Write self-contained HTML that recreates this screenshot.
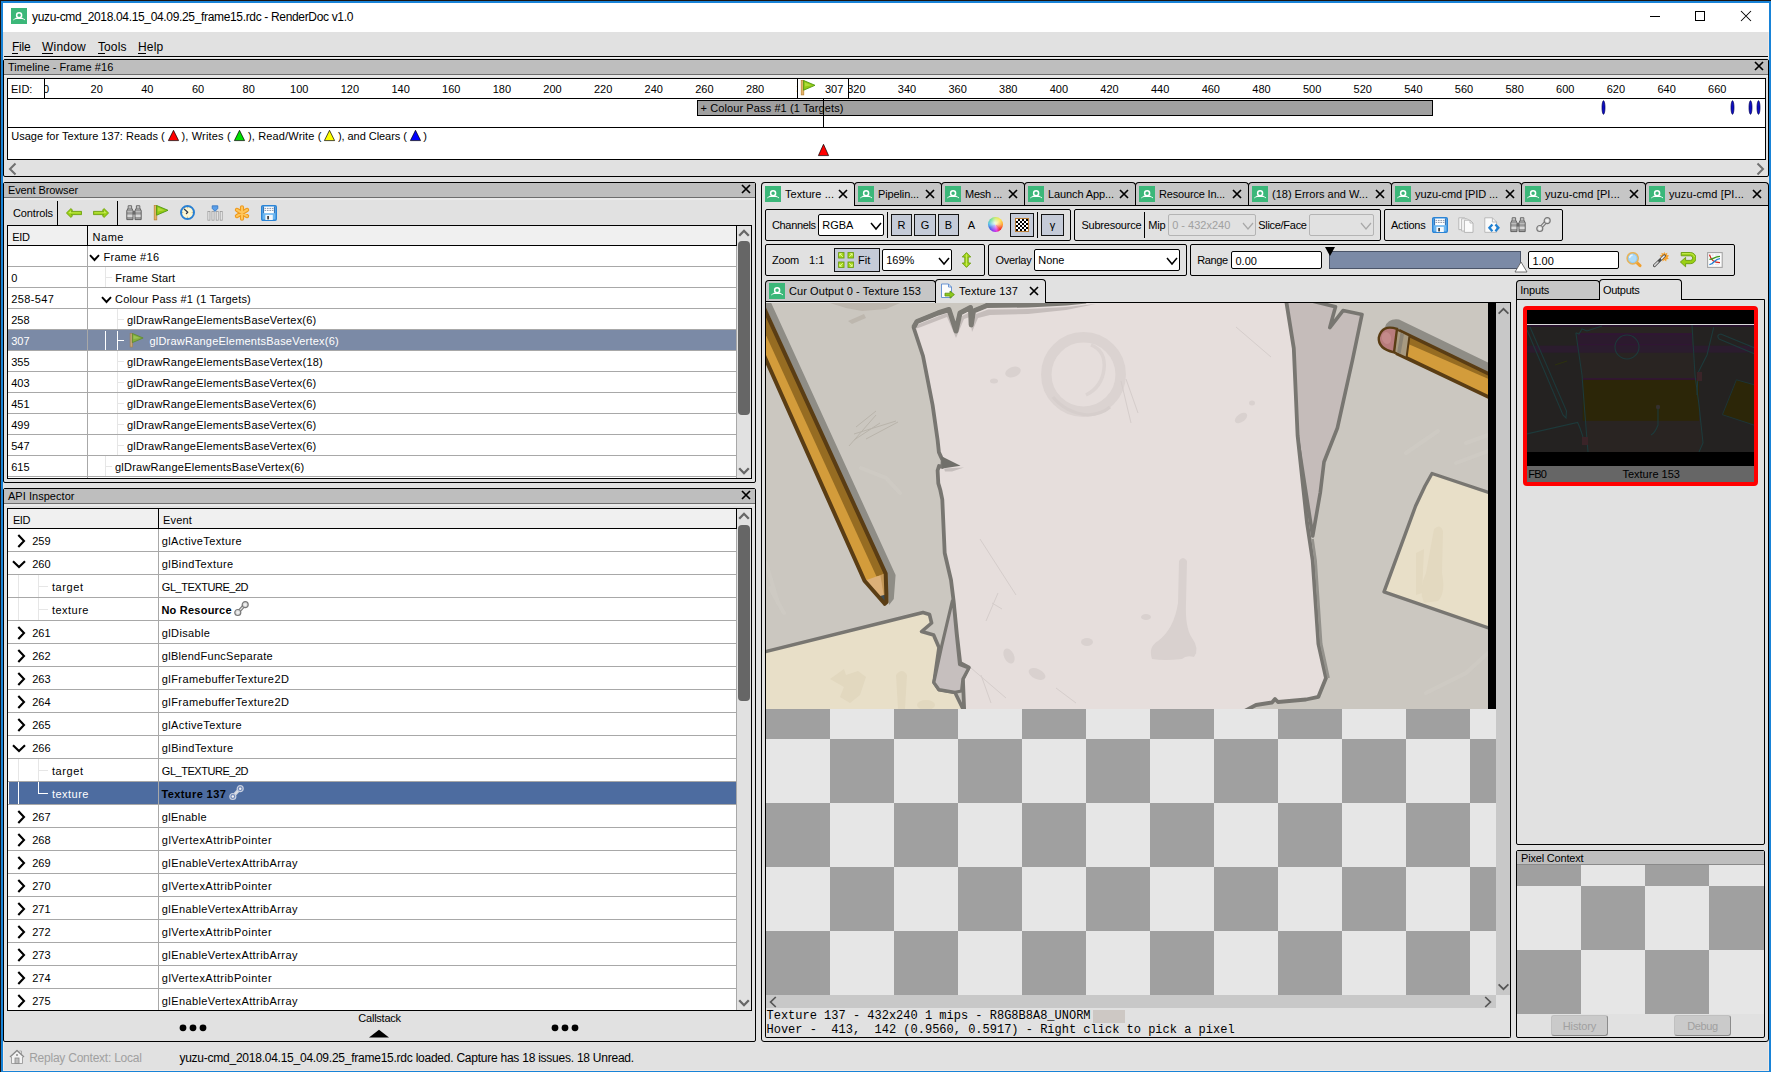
<!DOCTYPE html>
<html lang="en"><head><meta charset="utf-8"><title>yuzu-cmd_2018.04.15_04.09.25_frame15.rdc - RenderDoc v1.0</title>
<style>
html,body{margin:0;padding:0;}
body{width:1771px;height:1072px;overflow:hidden;position:relative;background:#e1e1e1;font-family:"Liberation Sans",sans-serif;font-size:11px;color:#000;}
#app div,#app span,#app svg{position:absolute;box-sizing:border-box;}
#app span{white-space:pre;line-height:1;}
#app{position:absolute;left:0;top:0;width:1771px;height:1072px;overflow:hidden;}
</style></head>
<body><div id="app">
<div style="left:0px;top:0px;width:1771px;height:1072px;background:#e1e1e1;"></div>
<div style="left:0px;top:0px;width:1771px;height:1px;background:#1b1512;"></div>
<div style="left:0px;top:0px;width:1px;height:1072px;background:#1b1512;"></div>
<div style="left:1px;top:1px;width:1770px;height:2px;background:#1883d7;"></div>
<div style="left:1px;top:1px;width:2px;height:1071px;background:#1883d7;"></div>
<div style="left:1769px;top:1px;width:2px;height:1071px;background:#1883d7;"></div>
<div style="left:1px;top:1071px;width:1770px;height:1px;background:#1883d7;"></div>
<div style="left:3px;top:3px;width:1766px;height:29px;background:#fff;"></div>
<svg style="left:11px;top:8px;" width="16" height="16" viewBox="0 0 16 16"><rect width="16" height="16" fill="#3bb779"/><circle cx="8.1" cy="7.2" r="2.5" fill="none" stroke="#fff" stroke-width="1.5"/><path d="M2.6 11.7 C4.4 10.3 5.6 10.3 8.1 10.3 C10.6 10.3 11.8 10.3 13.7 11.7" fill="none" stroke="#fff" stroke-width="0.9" stroke-linecap="round"/><path d="M4.9 10.3 H11.3" stroke="#fff" stroke-width="1.3" stroke-linecap="round"/></svg>
<span style="left:32.00px;top:11.00px;font-size:12px;letter-spacing:-0.337px;">yuzu-cmd_2018.04.15_04.09.25_frame15.rdc - RenderDoc v1.0</span>
<svg style="left:1649px;top:15px;" width="12" height="3" viewBox="0 0 12 3"><path d="M1 1.5 H11" stroke="#000" stroke-width="1"/></svg>
<div style="left:1695px;top:11px;width:10px;height:10px;border:1px solid #000;"></div>
<svg style="left:1740px;top:10px;" width="12" height="12" viewBox="0 0 12 12"><path d="M1 1 L11 11 M11 1 L1 11" stroke="#000" stroke-width="1.05" fill="none"/></svg>
<span style="left:12.00px;top:41.00px;font-size:12px;letter-spacing:-0.211px;">File</span>
<div style="left:12px;top:53px;width:6px;height:1px;background:#000;"></div>
<span style="left:42.00px;top:41.00px;font-size:12px;letter-spacing:0.219px;">Window</span>
<div style="left:42px;top:53px;width:11px;height:1px;background:#000;"></div>
<span style="left:98.00px;top:41.00px;font-size:12px;letter-spacing:0.097px;">Tools</span>
<div style="left:98px;top:53px;width:6.5px;height:1px;background:#000;"></div>
<span style="left:138.00px;top:41.00px;font-size:12px;letter-spacing:0.203px;">Help</span>
<div style="left:138px;top:53px;width:8px;height:1px;background:#000;"></div>
<div style="left:4px;top:56px;width:1764px;height:1px;background:#000;"></div>
<div style="left:4px;top:57px;width:1764px;height:1px;background:#f0f0f0;"></div>
<div style="left:3px;top:59px;width:1766px;height:118px;border:1px solid #000;border-radius:2px;"></div>
<div style="left:4px;top:60px;width:1764px;height:14px;background:#bebebe;"></div>
<div style="left:4px;top:74px;width:1764px;height:1px;background:#6e6e6e;"></div>
<div style="left:4px;top:75px;width:1764px;height:2px;background:#ebebeb;"></div>
<span style="left:8.00px;top:62.00px;font-size:11px;letter-spacing:0.059px;">Timeline - Frame #16</span>
<svg style="left:1754px;top:61px;" width="10" height="10" viewBox="0 0 10 10"><path d="M1 1 L9 9 M9 1 L1 9" stroke="#000" stroke-width="1.7" fill="none"/></svg>
<div style="left:7px;top:78px;width:1759px;height:82px;background:#fff;border:1px solid #000;"></div>
<div style="left:8px;top:98px;width:1757px;height:1px;background:#000;"></div>
<div style="left:8px;top:127px;width:1757px;height:1px;background:#000;"></div>
<div style="left:44px;top:79px;width:1px;height:19px;background:#000;"></div>
<span style="left:11.00px;top:84.00px;font-size:11px;">EID:</span>
<div style="left:45px;top:79px;width:1720px;height:19px;overflow:hidden;">
<span style="left:-1.96px;top:5.00px;font-size:11px;">0</span>
<span style="left:45.62px;top:5.00px;font-size:11px;">20</span>
<span style="left:96.25px;top:5.00px;font-size:11px;">40</span>
<span style="left:146.90px;top:5.00px;font-size:11px;">60</span>
<span style="left:197.53px;top:5.00px;font-size:11px;">80</span>
<span style="left:245.12px;top:5.00px;font-size:11px;">100</span>
<span style="left:295.76px;top:5.00px;font-size:11px;">120</span>
<span style="left:346.40px;top:5.00px;font-size:11px;">140</span>
<span style="left:397.04px;top:5.00px;font-size:11px;">160</span>
<span style="left:447.68px;top:5.00px;font-size:11px;">180</span>
<span style="left:498.32px;top:5.00px;font-size:11px;">200</span>
<span style="left:548.96px;top:5.00px;font-size:11px;">220</span>
<span style="left:599.60px;top:5.00px;font-size:11px;">240</span>
<span style="left:650.24px;top:5.00px;font-size:11px;">260</span>
<span style="left:700.88px;top:5.00px;font-size:11px;">280</span>
<span style="left:751.52px;top:5.00px;font-size:11px;">300</span>
<span style="left:802.16px;top:5.00px;font-size:11px;">320</span>
<span style="left:852.80px;top:5.00px;font-size:11px;">340</span>
<span style="left:903.44px;top:5.00px;font-size:11px;">360</span>
<span style="left:954.08px;top:5.00px;font-size:11px;">380</span>
<span style="left:1004.72px;top:5.00px;font-size:11px;">400</span>
<span style="left:1055.36px;top:5.00px;font-size:11px;">420</span>
<span style="left:1106.00px;top:5.00px;font-size:11px;">440</span>
<span style="left:1156.64px;top:5.00px;font-size:11px;">460</span>
<span style="left:1207.28px;top:5.00px;font-size:11px;">480</span>
<span style="left:1257.92px;top:5.00px;font-size:11px;">500</span>
<span style="left:1308.56px;top:5.00px;font-size:11px;">520</span>
<span style="left:1359.20px;top:5.00px;font-size:11px;">540</span>
<span style="left:1409.84px;top:5.00px;font-size:11px;">560</span>
<span style="left:1460.48px;top:5.00px;font-size:11px;">580</span>
<span style="left:1511.12px;top:5.00px;font-size:11px;">600</span>
<span style="left:1561.76px;top:5.00px;font-size:11px;">620</span>
<span style="left:1612.40px;top:5.00px;font-size:11px;">640</span>
<span style="left:1663.04px;top:5.00px;font-size:11px;">660</span>
</div>
<div style="left:797px;top:79px;width:52px;height:19px;background:#fff;border:1px solid #000;border-top:none;border-bottom:none;"></div>
<svg style="left:800px;top:80px;" width="16" height="16" viewBox="0 0 16 16"><rect x="1.2" y="0.3" width="2.6" height="14.6" fill="#e4b468" stroke="#b88030" stroke-width="0.7"/><path d="M3.6 0.5 L15 5.3 L3.6 10.2 Z" fill="#94c814" stroke="#4e9a10" stroke-width="0.9" stroke-linejoin="round"/><path d="M4.8 2.6 L11.6 5.3 L4.8 6.4 Z" fill="#b8e444" opacity="0.75"/></svg>
<span style="left:825.00px;top:84.00px;font-size:11px;">307</span>
<div style="left:697px;top:100px;width:736px;height:16px;background:#a0a0a0;border:1px solid #000;"></div>
<span style="left:700.50px;top:102.50px;font-size:11px;letter-spacing:0.103px;">+ Colour Pass #1 (1 Targets)</span>
<div style="left:823px;top:99px;width:1px;height:28px;background:#000;"></div>
<svg style="left:1600.9px;top:100px;" width="5" height="15" viewBox="0 0 5 15"><ellipse cx="2.5" cy="7.5" rx="1.5" ry="6.8" fill="#0c0cc4" stroke="#000050" stroke-width="0.7"/></svg>
<svg style="left:1729.7px;top:100px;" width="5" height="15" viewBox="0 0 5 15"><ellipse cx="2.5" cy="7.5" rx="1.5" ry="6.8" fill="#0c0cc4" stroke="#000050" stroke-width="0.7"/></svg>
<svg style="left:1747.8px;top:100px;" width="5" height="15" viewBox="0 0 5 15"><ellipse cx="2.5" cy="7.5" rx="1.5" ry="6.8" fill="#0c0cc4" stroke="#000050" stroke-width="0.7"/></svg>
<svg style="left:1755.7px;top:100px;" width="5" height="15" viewBox="0 0 5 15"><ellipse cx="2.5" cy="7.5" rx="1.5" ry="6.8" fill="#0c0cc4" stroke="#000050" stroke-width="0.7"/></svg>
<span style="left:11.20px;top:130.50px;font-size:11px;letter-spacing:0.028px;">Usage for Texture 137: Reads (</span>
<svg style="left:167.0px;top:129px;" width="13" height="13" viewBox="0 0 13 13"><path d="M6.5 1.3 L11.6 11.6 L1.4 11.6 Z" fill="#ff0000" stroke="#000" stroke-width="0.7"/></svg>
<span style="left:181.40px;top:130.50px;font-size:11px;letter-spacing:0.185px;">), Writes (</span>
<svg style="left:233.0px;top:129px;" width="13" height="13" viewBox="0 0 13 13"><path d="M6.5 1.3 L11.6 11.6 L1.4 11.6 Z" fill="#00e000" stroke="#000" stroke-width="0.7"/></svg>
<span style="left:248.00px;top:130.50px;font-size:11px;letter-spacing:0.146px;">), Read/Write (</span>
<svg style="left:323.0px;top:129px;" width="13" height="13" viewBox="0 0 13 13"><path d="M6.5 1.3 L11.6 11.6 L1.4 11.6 Z" fill="#ffff00" stroke="#000" stroke-width="0.7"/></svg>
<span style="left:337.90px;top:130.50px;font-size:11px;letter-spacing:-0.047px;">), and Clears (</span>
<svg style="left:408.9px;top:129px;" width="13" height="13" viewBox="0 0 13 13"><path d="M6.5 1.3 L11.6 11.6 L1.4 11.6 Z" fill="#0000ff" stroke="#000" stroke-width="0.7"/></svg>
<span style="left:423.30px;top:130.50px;font-size:11px;">)</span>
<svg style="left:817.0px;top:142.6px;" width="13" height="14" viewBox="0 0 13 14"><path d="M6.5 1.3 L11.6 12.6 L1.4 12.6 Z" fill="#ff0000" stroke="#000" stroke-width="0.7"/></svg>
<svg style="left:8px;top:162px;" width="10" height="14" viewBox="0 0 10 14"><path d="M7.5 1.5 L2 7 L7.5 12.5" stroke="#707070" stroke-width="2" fill="none"/></svg>
<svg style="left:1755px;top:162px;" width="10" height="14" viewBox="0 0 10 14"><path d="M2.5 1.5 L8 7 L2.5 12.5" stroke="#707070" stroke-width="2" fill="none"/></svg>
<div style="left:3px;top:182px;width:753px;height:301px;border:1px solid #000;border-radius:2px;"></div>
<div style="left:4px;top:183px;width:751px;height:14px;background:#bebebe;"></div>
<div style="left:4px;top:197px;width:751px;height:1px;background:#6e6e6e;"></div>
<div style="left:4px;top:198px;width:751px;height:2px;background:#ebebeb;"></div>
<span style="left:8.00px;top:185.00px;font-size:11px;letter-spacing:-0.118px;">Event Browser</span>
<svg style="left:741px;top:184px;" width="10" height="10" viewBox="0 0 10 10"><path d="M1 1 L9 9 M9 1 L1 9" stroke="#000" stroke-width="1.7" fill="none"/></svg>
<span style="left:13.00px;top:207.50px;font-size:11px;letter-spacing:-0.121px;">Controls</span>
<div style="left:57px;top:201px;width:1px;height:25px;background:#000;"></div>
<svg style="left:66px;top:205px;" width="16" height="16" viewBox="0 0 16 16"><path d="M0.4 8 L4.9 3.6 L6.6 5.2 L5.2 6.4 H15.6 V9.6 H5.2 L6.6 10.8 L4.9 12.4 Z" fill="#9ad014" stroke="#6ea00c" stroke-width="0.9" stroke-linejoin="round"/><path d="M2.4 8 L5 5.6 L5.2 7.4 H14.6 V8.2 H3.4 Z" fill="#d0f264" opacity="0.85"/></svg>
<svg style="left:93px;top:205px;" width="16" height="16" viewBox="0 0 16 16"><path d="M15.6 8 L11.1 3.6 L9.4 5.2 L10.8 6.4 H0.4 V9.6 H10.8 L9.4 10.8 L11.1 12.4 Z" fill="#9ad014" stroke="#6ea00c" stroke-width="0.9" stroke-linejoin="round"/><path d="M13.6 8 L11 5.6 L10.8 7.4 H1.4 V8.2 H12.6 Z" fill="#d0f264" opacity="0.85"/></svg>
<div style="left:117px;top:201px;width:1px;height:25px;background:#000;"></div>
<svg style="left:126px;top:205px;" width="16" height="16" viewBox="0 0 16 16"><path d="M2.2 0.8 H5.6 V3 L7 5.6 V14.6 H0.8 V5.6 L2.2 3 Z" fill="#9a9a9a" stroke="#585858" stroke-width="0.9" stroke-linejoin="round"/><path d="M10.4 0.8 H13.8 V3 L15.2 5.6 V14.6 H9 V5.6 L10.4 3 Z" fill="#9a9a9a" stroke="#585858" stroke-width="0.9" stroke-linejoin="round"/><rect x="7" y="6" width="2" height="3.6" fill="#6a6a6a"/><rect x="2.6" y="1.4" width="2.6" height="1.2" fill="#d4d4d4"/><rect x="10.8" y="1.4" width="2.6" height="1.2" fill="#d4d4d4"/><rect x="1.4" y="9.6" width="5" height="2.4" fill="#d8d8d8"/><rect x="9.6" y="9.6" width="5" height="2.4" fill="#d8d8d8"/><rect x="1.4" y="6" width="5" height="1.2" fill="#bcbcbc"/><rect x="9.6" y="6" width="5" height="1.2" fill="#bcbcbc"/></svg>
<svg style="left:153px;top:205px;" width="16" height="16" viewBox="0 0 16 16"><rect x="1.2" y="0.3" width="2.6" height="14.6" fill="#e4b468" stroke="#b88030" stroke-width="0.7"/><path d="M3.6 0.5 L15 5.3 L3.6 10.2 Z" fill="#94c814" stroke="#4e9a10" stroke-width="0.9" stroke-linejoin="round"/><path d="M4.8 2.6 L11.6 5.3 L4.8 6.4 Z" fill="#b8e444" opacity="0.75"/></svg>
<svg style="left:180px;top:205px;" width="16" height="16" viewBox="0 0 16 16"><circle cx="7.5" cy="7.5" r="6.5" fill="#fdf6d2" stroke="#2a80d2" stroke-width="2"/><path d="M4.4 4.2 L7.8 7.2 L6.4 8.5" stroke="#303848" stroke-width="1.2" fill="none" stroke-linecap="round" stroke-linejoin="round"/><path d="M7.5 2.4 V3.2 M7.5 11.8 V12.6 M2.4 7.5 H3.2 M11.8 7.5 H12.6" stroke="#a89060" stroke-width="0.9"/></svg>
<svg style="left:207px;top:205px;" width="16" height="16" viewBox="0 0 16 16"><g fill="#f4f4f4" stroke="#9a9a9a" stroke-width="0.8"><rect x="0.9" y="6.4" width="2" height="8.8"/><rect x="5" y="6.4" width="2" height="8.8"/><rect x="9.2" y="6.4" width="2" height="8.8"/><rect x="13.2" y="6.4" width="2" height="8.8"/></g><path d="M5.2 0.8 H10.8 V3.4 L8 6.4 L5.2 3.4 Z" fill="#5a9ee8" stroke="#2f72c0" stroke-width="0.8"/></svg>
<svg style="left:234px;top:205px;" width="16" height="16" viewBox="0 0 16 16"><g stroke="#ee9a1e" stroke-width="4.2" stroke-linecap="round"><path d="M8 2.3 V13.7 M2.9 4.9 L13.1 11.1 M13.1 4.9 L2.9 11.1"/></g><g stroke="#ffc65a" stroke-width="2" stroke-linecap="round"><path d="M8 2.3 V13.7 M2.9 4.9 L13.1 11.1 M13.1 4.9 L2.9 11.1"/></g></svg>
<svg style="left:261px;top:205px;" width="16" height="16" viewBox="0 0 16 16"><rect x="0.7" y="0.7" width="14.6" height="14.6" rx="1.2" fill="#6cb6f0" stroke="#2a84d6" stroke-width="1.4"/><rect x="2.6" y="1.6" width="10.8" height="6.6" fill="#fff"/><path d="M3.6 3.4 H12.4 M3.6 5.4 H12.4" stroke="#7a8aa0" stroke-width="0.9" stroke-dasharray="1.6 0.8"/><path d="M2.6 1.6 V8.2 M13.4 1.6 V8.2" stroke="#1c5fa8" stroke-width="0.9"/><rect x="4.4" y="9.8" width="7.4" height="5.2" fill="#f4f8fc"/><rect x="6.2" y="11" width="1.8" height="3.4" fill="#444"/></svg>
<div style="left:7px;top:225px;width:745px;height:254px;background:#fff;border:1px solid #000;"></div>
<div style="left:8px;top:226px;width:729px;height:19px;background:#f0f0f0;"></div>
<div style="left:8px;top:245px;width:729px;height:1px;background:#000;"></div>
<div style="left:736px;top:226px;width:1px;height:20px;background:#000;"></div>
<div style="left:87px;top:226px;width:1px;height:20px;background:#000;"></div>
<span style="left:12.30px;top:232.00px;font-size:11px;letter-spacing:-0.381px;">EID</span>
<span style="left:92.60px;top:232.00px;font-size:11px;letter-spacing:0.489px;">Name</span>
<div style="left:8px;top:246px;width:729px;height:232px;overflow:hidden;">
<div style="left:0px;top:20px;width:729px;height:1px;background:#a8a8a8;"></div>
<span style="left:95.40px;top:6.00px;font-size:11px;letter-spacing:0.311px;">Frame #16</span>
<svg style="left:80.5px;top:8px;" width="11" height="8" viewBox="0 0 11 8"><path d="M1 1.2 L5.5 6 L10 1.2" stroke="#000" stroke-width="1.9" fill="none"/></svg>
<div style="left:0px;top:41px;width:729px;height:1px;background:#a8a8a8;"></div>
<span style="left:3.20px;top:27.00px;font-size:11px;">0</span>
<span style="left:107.30px;top:27.00px;font-size:11px;letter-spacing:0.175px;">Frame Start</span>
<div style="left:97px;top:21px;width:1px;height:20px;background:#e6e6e6;"></div>
<div style="left:97px;top:31px;width:7px;height:1px;background:#e6e6e6;"></div>
<div style="left:0px;top:62px;width:729px;height:1px;background:#a8a8a8;"></div>
<span style="left:3.20px;top:48.00px;font-size:11px;letter-spacing:0.375px;">258-547</span>
<span style="left:107.00px;top:48.00px;font-size:11px;letter-spacing:0.206px;">Colour Pass #1 (1 Targets)</span>
<svg style="left:92.5px;top:50px;" width="11" height="8" viewBox="0 0 11 8"><path d="M1 1.2 L5.5 6 L10 1.2" stroke="#000" stroke-width="1.9" fill="none"/></svg>
<div style="left:0px;top:83px;width:729px;height:1px;background:#a8a8a8;"></div>
<span style="left:3.20px;top:69.00px;font-size:11px;">258</span>
<span style="left:119.00px;top:69.00px;font-size:11px;letter-spacing:0.228px;">glDrawRangeElementsBaseVertex(6)</span>
<div style="left:109px;top:63px;width:1px;height:20px;background:#e6e6e6;"></div>
<div style="left:109px;top:73px;width:7px;height:1px;background:#e6e6e6;"></div>
<div style="left:0px;top:84px;width:729px;height:20px;background:#7b8aa6;"></div>
<div style="left:0px;top:104px;width:729px;height:1px;background:#a8a8a8;"></div>
<span style="left:3.20px;top:90.00px;font-size:11px;color:#fff;">307</span>
<span style="left:141.40px;top:90.00px;font-size:11px;color:#fff;letter-spacing:0.228px;">glDrawRangeElementsBaseVertex(6)</span>
<div style="left:97px;top:85px;width:1px;height:19px;background:#fff;"></div>
<div style="left:109px;top:85px;width:1px;height:19px;background:#fff;"></div>
<div style="left:109px;top:94px;width:7px;height:1px;background:#fff;"></div>
<svg style="left:120.5px;top:86.5px;" width="16" height="16" viewBox="0 0 17 17"><rect x="1.2" y="0.3" width="2.6" height="14.6" fill="#c8a878" stroke="#a08050" stroke-width="0.7"/><path d="M3.6 0.5 L15 5.3 L3.6 10.2 Z" fill="#86b03a" stroke="#5e8a30" stroke-width="0.9" stroke-linejoin="round"/><path d="M4.8 2.6 L11.6 5.3 L4.8 6.4 Z" fill="#a0c860" opacity="0.75"/></svg>
<div style="left:0px;top:125px;width:729px;height:1px;background:#a8a8a8;"></div>
<span style="left:3.20px;top:111.00px;font-size:11px;">355</span>
<span style="left:119.00px;top:111.00px;font-size:11px;letter-spacing:0.232px;">glDrawRangeElementsBaseVertex(18)</span>
<div style="left:109px;top:105px;width:1px;height:20px;background:#e6e6e6;"></div>
<div style="left:109px;top:115px;width:7px;height:1px;background:#e6e6e6;"></div>
<div style="left:0px;top:146px;width:729px;height:1px;background:#a8a8a8;"></div>
<span style="left:3.20px;top:132.00px;font-size:11px;">403</span>
<span style="left:119.00px;top:132.00px;font-size:11px;letter-spacing:0.228px;">glDrawRangeElementsBaseVertex(6)</span>
<div style="left:109px;top:126px;width:1px;height:20px;background:#e6e6e6;"></div>
<div style="left:109px;top:136px;width:7px;height:1px;background:#e6e6e6;"></div>
<div style="left:0px;top:167px;width:729px;height:1px;background:#a8a8a8;"></div>
<span style="left:3.20px;top:153.00px;font-size:11px;">451</span>
<span style="left:119.00px;top:153.00px;font-size:11px;letter-spacing:0.228px;">glDrawRangeElementsBaseVertex(6)</span>
<div style="left:109px;top:147px;width:1px;height:20px;background:#e6e6e6;"></div>
<div style="left:109px;top:157px;width:7px;height:1px;background:#e6e6e6;"></div>
<div style="left:0px;top:188px;width:729px;height:1px;background:#a8a8a8;"></div>
<span style="left:3.20px;top:174.00px;font-size:11px;">499</span>
<span style="left:119.00px;top:174.00px;font-size:11px;letter-spacing:0.228px;">glDrawRangeElementsBaseVertex(6)</span>
<div style="left:109px;top:168px;width:1px;height:20px;background:#e6e6e6;"></div>
<div style="left:109px;top:178px;width:7px;height:1px;background:#e6e6e6;"></div>
<div style="left:0px;top:209px;width:729px;height:1px;background:#a8a8a8;"></div>
<span style="left:3.20px;top:195.00px;font-size:11px;">547</span>
<span style="left:119.00px;top:195.00px;font-size:11px;letter-spacing:0.228px;">glDrawRangeElementsBaseVertex(6)</span>
<div style="left:109px;top:189px;width:1px;height:20px;background:#e6e6e6;"></div>
<div style="left:109px;top:199px;width:7px;height:1px;background:#e6e6e6;"></div>
<div style="left:0px;top:230px;width:729px;height:1px;background:#a8a8a8;"></div>
<span style="left:3.20px;top:216.00px;font-size:11px;">615</span>
<span style="left:107.00px;top:216.00px;font-size:11px;letter-spacing:0.228px;">glDrawRangeElementsBaseVertex(6)</span>
<div style="left:97px;top:210px;width:1px;height:20px;background:#e6e6e6;"></div>
<div style="left:97px;top:220px;width:7px;height:1px;background:#e6e6e6;"></div>
<div style="left:79px;top:0px;width:1px;height:232px;background:#a8a8a8;"></div>
</div>
<div style="left:737px;top:226px;width:14px;height:252px;background:#e1e1e1;"></div>
<svg style="left:738px;top:229.2px;" width="12" height="8" viewBox="0 0 12 8"><path d="M1.2 6.8 L6 1.8 L10.8 6.8" stroke="#666" stroke-width="2.3" fill="none"/></svg>
<svg style="left:738px;top:466.5px;" width="12" height="8" viewBox="0 0 12 8"><path d="M1.2 1.2 L6 6.2 L10.8 1.2" stroke="#666" stroke-width="2.3" fill="none"/></svg>
<div style="left:738px;top:241px;width:12px;height:174px;background:#666;border-radius:4px;"></div>
<div style="left:736px;top:246px;width:1px;height:232px;background:#a8a8a8;"></div>
<div style="left:3px;top:488px;width:753px;height:554px;border:1px solid #000;border-radius:2px;"></div>
<div style="left:4px;top:489px;width:751px;height:14px;background:#bebebe;"></div>
<div style="left:4px;top:503px;width:751px;height:1px;background:#6e6e6e;"></div>
<div style="left:4px;top:504px;width:751px;height:2px;background:#ebebeb;"></div>
<span style="left:8.00px;top:491.00px;font-size:11px;letter-spacing:0.035px;">API Inspector</span>
<svg style="left:741px;top:490px;" width="10" height="10" viewBox="0 0 10 10"><path d="M1 1 L9 9 M9 1 L1 9" stroke="#000" stroke-width="1.7" fill="none"/></svg>
<div style="left:7px;top:508px;width:745px;height:503px;background:#fff;border:1px solid #000;"></div>
<div style="left:8px;top:509px;width:729px;height:19px;background:#f0f0f0;"></div>
<div style="left:8px;top:528px;width:729px;height:1px;background:#000;"></div>
<div style="left:736px;top:509px;width:1px;height:20px;background:#000;"></div>
<div style="left:158px;top:509px;width:1px;height:20px;background:#000;"></div>
<span style="left:12.90px;top:515.00px;font-size:11px;letter-spacing:-0.381px;">EID</span>
<span style="left:163.00px;top:515.00px;font-size:11px;letter-spacing:0.172px;">Event</span>
<div style="left:8px;top:529px;width:729px;height:481px;overflow:hidden;">
<div style="left:0px;top:22px;width:729px;height:1px;background:#a8a8a8;"></div>
<svg style="left:9.2px;top:4.5px;" width="9" height="14" viewBox="0 0 9 14"><path d="M1.3 1 L7 7 L1.3 13" stroke="#000" stroke-width="2.1" fill="none"/></svg>
<span style="left:24.20px;top:6.50px;font-size:11px;">259</span>
<span style="left:153.80px;top:6.50px;font-size:11px;letter-spacing:0.380px;">glActiveTexture</span>
<div style="left:0px;top:45px;width:729px;height:1px;background:#a8a8a8;"></div>
<svg style="left:4.3px;top:31.3px;" width="14" height="9" viewBox="0 0 14 9"><path d="M1 1.2 L7 7 L13 1.2" stroke="#000" stroke-width="2.1" fill="none"/></svg>
<span style="left:24.20px;top:29.50px;font-size:11px;">260</span>
<span style="left:153.80px;top:29.50px;font-size:11px;letter-spacing:0.388px;">glBindTexture</span>
<div style="left:0px;top:68px;width:729px;height:1px;background:#a8a8a8;"></div>
<span style="left:43.90px;top:52.50px;font-size:11px;letter-spacing:0.610px;">target</span>
<div style="left:30px;top:46px;width:1px;height:22px;background:#e6e6e6;"></div>
<div style="left:10px;top:46px;width:1px;height:22px;background:#e6e6e6;"></div>
<div style="left:30px;top:57px;width:10px;height:1px;background:#e6e6e6;"></div>
<span style="left:153.80px;top:52.50px;font-size:11px;letter-spacing:-0.463px;">GL_TEXTURE_2D</span>
<div style="left:0px;top:91px;width:729px;height:1px;background:#a8a8a8;"></div>
<span style="left:43.90px;top:75.50px;font-size:11px;letter-spacing:0.480px;">texture</span>
<div style="left:30px;top:69px;width:1px;height:22px;background:#e6e6e6;"></div>
<div style="left:10px;top:69px;width:1px;height:22px;background:#e6e6e6;"></div>
<div style="left:30px;top:80px;width:10px;height:1px;background:#e6e6e6;"></div>
<span style="left:153.40px;top:75.50px;font-size:11px;font-weight:700;letter-spacing:0.231px;">No Resource</span>
<svg style="left:226px;top:72px;" width="16" height="16" viewBox="0 0 16 16"><path d="M5.6 9.6 L9.4 5.4" stroke="#7a7a7a" stroke-width="3.4" stroke-linecap="round"/><path d="M5.6 9.6 L9.4 5.4" stroke="#e4e4e4" stroke-width="1.2" stroke-linecap="round"/><circle cx="11.2" cy="3.7" r="3" fill="#dcdcdc" stroke="#787878" stroke-width="1.2"/><circle cx="3.8" cy="11.5" r="3" fill="#dcdcdc" stroke="#787878" stroke-width="1.2"/><circle cx="11.2" cy="3.7" r="1.2" fill="#f4f4f4"/><circle cx="3.8" cy="11.5" r="1.2" fill="#f4f4f4"/></svg>
<div style="left:0px;top:114px;width:729px;height:1px;background:#a8a8a8;"></div>
<svg style="left:9.2px;top:96.5px;" width="9" height="14" viewBox="0 0 9 14"><path d="M1.3 1 L7 7 L1.3 13" stroke="#000" stroke-width="2.1" fill="none"/></svg>
<span style="left:24.20px;top:98.50px;font-size:11px;">261</span>
<span style="left:153.80px;top:98.50px;font-size:11px;letter-spacing:0.361px;">glDisable</span>
<div style="left:0px;top:137px;width:729px;height:1px;background:#a8a8a8;"></div>
<svg style="left:9.2px;top:119.5px;" width="9" height="14" viewBox="0 0 9 14"><path d="M1.3 1 L7 7 L1.3 13" stroke="#000" stroke-width="2.1" fill="none"/></svg>
<span style="left:24.20px;top:121.50px;font-size:11px;">262</span>
<span style="left:153.80px;top:121.50px;font-size:11px;letter-spacing:0.284px;">glBlendFuncSeparate</span>
<div style="left:0px;top:160px;width:729px;height:1px;background:#a8a8a8;"></div>
<svg style="left:9.2px;top:142.5px;" width="9" height="14" viewBox="0 0 9 14"><path d="M1.3 1 L7 7 L1.3 13" stroke="#000" stroke-width="2.1" fill="none"/></svg>
<span style="left:24.20px;top:144.50px;font-size:11px;">263</span>
<span style="left:153.80px;top:144.50px;font-size:11px;letter-spacing:0.413px;">glFramebufferTexture2D</span>
<div style="left:0px;top:183px;width:729px;height:1px;background:#a8a8a8;"></div>
<svg style="left:9.2px;top:165.5px;" width="9" height="14" viewBox="0 0 9 14"><path d="M1.3 1 L7 7 L1.3 13" stroke="#000" stroke-width="2.1" fill="none"/></svg>
<span style="left:24.20px;top:167.50px;font-size:11px;">264</span>
<span style="left:153.80px;top:167.50px;font-size:11px;letter-spacing:0.413px;">glFramebufferTexture2D</span>
<div style="left:0px;top:206px;width:729px;height:1px;background:#a8a8a8;"></div>
<svg style="left:9.2px;top:188.5px;" width="9" height="14" viewBox="0 0 9 14"><path d="M1.3 1 L7 7 L1.3 13" stroke="#000" stroke-width="2.1" fill="none"/></svg>
<span style="left:24.20px;top:190.50px;font-size:11px;">265</span>
<span style="left:153.80px;top:190.50px;font-size:11px;letter-spacing:0.380px;">glActiveTexture</span>
<div style="left:0px;top:229px;width:729px;height:1px;background:#a8a8a8;"></div>
<svg style="left:4.3px;top:215.3px;" width="14" height="9" viewBox="0 0 14 9"><path d="M1 1.2 L7 7 L13 1.2" stroke="#000" stroke-width="2.1" fill="none"/></svg>
<span style="left:24.20px;top:213.50px;font-size:11px;">266</span>
<span style="left:153.80px;top:213.50px;font-size:11px;letter-spacing:0.388px;">glBindTexture</span>
<div style="left:0px;top:252px;width:729px;height:1px;background:#a8a8a8;"></div>
<span style="left:43.90px;top:236.50px;font-size:11px;letter-spacing:0.610px;">target</span>
<div style="left:30px;top:230px;width:1px;height:22px;background:#e6e6e6;"></div>
<div style="left:10px;top:230px;width:1px;height:22px;background:#e6e6e6;"></div>
<div style="left:30px;top:241px;width:10px;height:1px;background:#e6e6e6;"></div>
<span style="left:153.80px;top:236.50px;font-size:11px;letter-spacing:-0.463px;">GL_TEXTURE_2D</span>
<div style="left:1px;top:253px;width:728px;height:22px;background:#4d6ca0;"></div>
<div style="left:0px;top:275px;width:729px;height:1px;background:#a8a8a8;"></div>
<span style="left:43.90px;top:259.50px;font-size:11px;color:#fff;letter-spacing:0.480px;">texture</span>
<div style="left:10px;top:253px;width:1px;height:22px;background:#fff;"></div>
<div style="left:30px;top:253px;width:1px;height:12px;background:#fff;"></div>
<div style="left:30px;top:264px;width:10px;height:1px;background:#fff;"></div>
<span style="left:153.40px;top:259.50px;font-size:11px;font-weight:700;letter-spacing:0.407px;">Texture 137</span>
<svg style="left:221px;top:256px;" width="16" height="16" viewBox="0 0 16 16"><path d="M5.6 9.6 L9.4 5.4" stroke="#c8d0e0" stroke-width="3.4" stroke-linecap="round"/><path d="M5.6 9.6 L9.4 5.4" stroke="#e4e4e4" stroke-width="1.2" stroke-linecap="round"/><circle cx="11.2" cy="3.7" r="3" fill="#7088b8" stroke="#c8d0e0" stroke-width="1.2"/><circle cx="3.8" cy="11.5" r="3" fill="#7088b8" stroke="#c8d0e0" stroke-width="1.2"/><circle cx="11.2" cy="3.7" r="1.2" fill="#f4f4f4"/><circle cx="3.8" cy="11.5" r="1.2" fill="#f4f4f4"/></svg>
<div style="left:0px;top:298px;width:729px;height:1px;background:#a8a8a8;"></div>
<svg style="left:9.2px;top:280.5px;" width="9" height="14" viewBox="0 0 9 14"><path d="M1.3 1 L7 7 L1.3 13" stroke="#000" stroke-width="2.1" fill="none"/></svg>
<span style="left:24.20px;top:282.50px;font-size:11px;">267</span>
<span style="left:153.80px;top:282.50px;font-size:11px;letter-spacing:0.271px;">glEnable</span>
<div style="left:0px;top:321px;width:729px;height:1px;background:#a8a8a8;"></div>
<svg style="left:9.2px;top:303.5px;" width="9" height="14" viewBox="0 0 9 14"><path d="M1.3 1 L7 7 L1.3 13" stroke="#000" stroke-width="2.1" fill="none"/></svg>
<span style="left:24.20px;top:305.50px;font-size:11px;">268</span>
<span style="left:153.80px;top:305.50px;font-size:11px;letter-spacing:0.477px;">glVertexAttribPointer</span>
<div style="left:0px;top:344px;width:729px;height:1px;background:#a8a8a8;"></div>
<svg style="left:9.2px;top:326.5px;" width="9" height="14" viewBox="0 0 9 14"><path d="M1.3 1 L7 7 L1.3 13" stroke="#000" stroke-width="2.1" fill="none"/></svg>
<span style="left:24.20px;top:328.50px;font-size:11px;">269</span>
<span style="left:153.80px;top:328.50px;font-size:11px;letter-spacing:0.402px;">glEnableVertexAttribArray</span>
<div style="left:0px;top:367px;width:729px;height:1px;background:#a8a8a8;"></div>
<svg style="left:9.2px;top:349.5px;" width="9" height="14" viewBox="0 0 9 14"><path d="M1.3 1 L7 7 L1.3 13" stroke="#000" stroke-width="2.1" fill="none"/></svg>
<span style="left:24.20px;top:351.50px;font-size:11px;">270</span>
<span style="left:153.80px;top:351.50px;font-size:11px;letter-spacing:0.477px;">glVertexAttribPointer</span>
<div style="left:0px;top:390px;width:729px;height:1px;background:#a8a8a8;"></div>
<svg style="left:9.2px;top:372.5px;" width="9" height="14" viewBox="0 0 9 14"><path d="M1.3 1 L7 7 L1.3 13" stroke="#000" stroke-width="2.1" fill="none"/></svg>
<span style="left:24.20px;top:374.50px;font-size:11px;">271</span>
<span style="left:153.80px;top:374.50px;font-size:11px;letter-spacing:0.402px;">glEnableVertexAttribArray</span>
<div style="left:0px;top:413px;width:729px;height:1px;background:#a8a8a8;"></div>
<svg style="left:9.2px;top:395.5px;" width="9" height="14" viewBox="0 0 9 14"><path d="M1.3 1 L7 7 L1.3 13" stroke="#000" stroke-width="2.1" fill="none"/></svg>
<span style="left:24.20px;top:397.50px;font-size:11px;">272</span>
<span style="left:153.80px;top:397.50px;font-size:11px;letter-spacing:0.477px;">glVertexAttribPointer</span>
<div style="left:0px;top:436px;width:729px;height:1px;background:#a8a8a8;"></div>
<svg style="left:9.2px;top:418.5px;" width="9" height="14" viewBox="0 0 9 14"><path d="M1.3 1 L7 7 L1.3 13" stroke="#000" stroke-width="2.1" fill="none"/></svg>
<span style="left:24.20px;top:420.50px;font-size:11px;">273</span>
<span style="left:153.80px;top:420.50px;font-size:11px;letter-spacing:0.402px;">glEnableVertexAttribArray</span>
<div style="left:0px;top:459px;width:729px;height:1px;background:#a8a8a8;"></div>
<svg style="left:9.2px;top:441.5px;" width="9" height="14" viewBox="0 0 9 14"><path d="M1.3 1 L7 7 L1.3 13" stroke="#000" stroke-width="2.1" fill="none"/></svg>
<span style="left:24.20px;top:443.50px;font-size:11px;">274</span>
<span style="left:153.80px;top:443.50px;font-size:11px;letter-spacing:0.477px;">glVertexAttribPointer</span>
<div style="left:0px;top:482px;width:729px;height:1px;background:#a8a8a8;"></div>
<svg style="left:9.2px;top:464.5px;" width="9" height="14" viewBox="0 0 9 14"><path d="M1.3 1 L7 7 L1.3 13" stroke="#000" stroke-width="2.1" fill="none"/></svg>
<span style="left:24.20px;top:466.50px;font-size:11px;">275</span>
<span style="left:153.80px;top:466.50px;font-size:11px;letter-spacing:0.402px;">glEnableVertexAttribArray</span>
<div style="left:150px;top:0px;width:1px;height:481px;background:#a8a8a8;"></div>
</div>
<div style="left:737px;top:509px;width:14px;height:501px;background:#e1e1e1;"></div>
<svg style="left:738px;top:512.2px;" width="12" height="8" viewBox="0 0 12 8"><path d="M1.2 6.8 L6 1.8 L10.8 6.8" stroke="#666" stroke-width="2.3" fill="none"/></svg>
<svg style="left:738px;top:998.5px;" width="12" height="8" viewBox="0 0 12 8"><path d="M1.2 1.2 L6 6.2 L10.8 1.2" stroke="#666" stroke-width="2.3" fill="none"/></svg>
<div style="left:738px;top:524.5px;width:12px;height:176.5px;background:#666;border-radius:4px;"></div>
<div style="left:736px;top:529px;width:1px;height:481px;background:#a8a8a8;"></div>
<span style="left:358.35px;top:1012.80px;font-size:11px;letter-spacing:-0.236px;">Callstack</span>
<svg style="left:368px;top:1029px;" width="22" height="9" viewBox="0 0 22 9"><path d="M1 8.5 L11 0.8 L21 8.5 Z" fill="#000"/></svg>
<svg style="left:178px;top:1023px;" width="30" height="10" viewBox="0 0 30 10"><circle cx="5" cy="4.8" r="3.4" fill="#000"/><circle cx="15" cy="4.8" r="3.4" fill="#000"/><circle cx="25" cy="4.8" r="3.4" fill="#000"/></svg>
<svg style="left:550px;top:1023px;" width="30" height="10" viewBox="0 0 30 10"><circle cx="5" cy="4.8" r="3.4" fill="#000"/><circle cx="15" cy="4.8" r="3.4" fill="#000"/><circle cx="25" cy="4.8" r="3.4" fill="#000"/></svg>
<div style="left:761px;top:205px;width:1008px;height:837px;border:1px solid #000;border-radius:0 0 3px 3px;"></div>
<div style="left:761px;top:205px;width:1008px;height:1px;background:#000;"></div>
<div style="left:1645px;top:182px;width:124px;height:23px;background:#c6c6c6;border:1px solid #000;border-radius:4px 4px 0 0;border-bottom:none;"></div>
<svg style="left:1649px;top:186px;" width="16" height="16" viewBox="0 0 16 16"><rect width="16" height="16" fill="#3bb779"/><circle cx="8.1" cy="7.2" r="2.5" fill="none" stroke="#fff" stroke-width="1.5"/><path d="M2.6 11.7 C4.4 10.3 5.6 10.3 8.1 10.3 C10.6 10.3 11.8 10.3 13.7 11.7" fill="none" stroke="#fff" stroke-width="0.9" stroke-linecap="round"/><path d="M4.9 10.3 H11.3" stroke="#fff" stroke-width="1.3" stroke-linecap="round"/></svg>
<span style="left:1669.00px;top:189.00px;font-size:11px;letter-spacing:0.109px;">yuzu-cmd [PI...</span>
<svg style="left:1752px;top:189px;" width="10" height="10" viewBox="0 0 10 10"><path d="M1 1 L9 9 M9 1 L1 9" stroke="#000" stroke-width="1.7" fill="none"/></svg>
<div style="left:1521px;top:182px;width:125px;height:23px;background:#c6c6c6;border:1px solid #000;border-radius:4px 4px 0 0;border-bottom:none;"></div>
<svg style="left:1525px;top:186px;" width="16" height="16" viewBox="0 0 16 16"><rect width="16" height="16" fill="#3bb779"/><circle cx="8.1" cy="7.2" r="2.5" fill="none" stroke="#fff" stroke-width="1.5"/><path d="M2.6 11.7 C4.4 10.3 5.6 10.3 8.1 10.3 C10.6 10.3 11.8 10.3 13.7 11.7" fill="none" stroke="#fff" stroke-width="0.9" stroke-linecap="round"/><path d="M4.9 10.3 H11.3" stroke="#fff" stroke-width="1.3" stroke-linecap="round"/></svg>
<span style="left:1545.00px;top:189.00px;font-size:11px;letter-spacing:0.109px;">yuzu-cmd [PI...</span>
<svg style="left:1629px;top:189px;" width="10" height="10" viewBox="0 0 10 10"><path d="M1 1 L9 9 M9 1 L1 9" stroke="#000" stroke-width="1.7" fill="none"/></svg>
<div style="left:1391px;top:182px;width:131px;height:23px;background:#c6c6c6;border:1px solid #000;border-radius:4px 4px 0 0;border-bottom:none;"></div>
<svg style="left:1395px;top:186px;" width="16" height="16" viewBox="0 0 16 16"><rect width="16" height="16" fill="#3bb779"/><circle cx="8.1" cy="7.2" r="2.5" fill="none" stroke="#fff" stroke-width="1.5"/><path d="M2.6 11.7 C4.4 10.3 5.6 10.3 8.1 10.3 C10.6 10.3 11.8 10.3 13.7 11.7" fill="none" stroke="#fff" stroke-width="0.9" stroke-linecap="round"/><path d="M4.9 10.3 H11.3" stroke="#fff" stroke-width="1.3" stroke-linecap="round"/></svg>
<span style="left:1415.00px;top:189.00px;font-size:11px;letter-spacing:-0.080px;">yuzu-cmd [PID ...</span>
<svg style="left:1505px;top:189px;" width="10" height="10" viewBox="0 0 10 10"><path d="M1 1 L9 9 M9 1 L1 9" stroke="#000" stroke-width="1.7" fill="none"/></svg>
<div style="left:1248px;top:182px;width:144px;height:23px;background:#c6c6c6;border:1px solid #000;border-radius:4px 4px 0 0;border-bottom:none;"></div>
<svg style="left:1252px;top:186px;" width="16" height="16" viewBox="0 0 16 16"><rect width="16" height="16" fill="#3bb779"/><circle cx="8.1" cy="7.2" r="2.5" fill="none" stroke="#fff" stroke-width="1.5"/><path d="M2.6 11.7 C4.4 10.3 5.6 10.3 8.1 10.3 C10.6 10.3 11.8 10.3 13.7 11.7" fill="none" stroke="#fff" stroke-width="0.9" stroke-linecap="round"/><path d="M4.9 10.3 H11.3" stroke="#fff" stroke-width="1.3" stroke-linecap="round"/></svg>
<span style="left:1272.00px;top:189.00px;font-size:11px;">(18) Errors and W...</span>
<svg style="left:1375px;top:189px;" width="10" height="10" viewBox="0 0 10 10"><path d="M1 1 L9 9 M9 1 L1 9" stroke="#000" stroke-width="1.7" fill="none"/></svg>
<div style="left:1135px;top:182px;width:114px;height:23px;background:#c6c6c6;border:1px solid #000;border-radius:4px 4px 0 0;border-bottom:none;"></div>
<svg style="left:1139px;top:186px;" width="16" height="16" viewBox="0 0 16 16"><rect width="16" height="16" fill="#3bb779"/><circle cx="8.1" cy="7.2" r="2.5" fill="none" stroke="#fff" stroke-width="1.5"/><path d="M2.6 11.7 C4.4 10.3 5.6 10.3 8.1 10.3 C10.6 10.3 11.8 10.3 13.7 11.7" fill="none" stroke="#fff" stroke-width="0.9" stroke-linecap="round"/><path d="M4.9 10.3 H11.3" stroke="#fff" stroke-width="1.3" stroke-linecap="round"/></svg>
<span style="left:1159.00px;top:189.00px;font-size:11px;letter-spacing:-0.177px;">Resource In...</span>
<svg style="left:1232px;top:189px;" width="10" height="10" viewBox="0 0 10 10"><path d="M1 1 L9 9 M9 1 L1 9" stroke="#000" stroke-width="1.7" fill="none"/></svg>
<div style="left:1024px;top:182px;width:112px;height:23px;background:#c6c6c6;border:1px solid #000;border-radius:4px 4px 0 0;border-bottom:none;"></div>
<svg style="left:1028px;top:186px;" width="16" height="16" viewBox="0 0 16 16"><rect width="16" height="16" fill="#3bb779"/><circle cx="8.1" cy="7.2" r="2.5" fill="none" stroke="#fff" stroke-width="1.5"/><path d="M2.6 11.7 C4.4 10.3 5.6 10.3 8.1 10.3 C10.6 10.3 11.8 10.3 13.7 11.7" fill="none" stroke="#fff" stroke-width="0.9" stroke-linecap="round"/><path d="M4.9 10.3 H11.3" stroke="#fff" stroke-width="1.3" stroke-linecap="round"/></svg>
<span style="left:1048.00px;top:189.00px;font-size:11px;letter-spacing:-0.099px;">Launch App...</span>
<svg style="left:1119px;top:189px;" width="10" height="10" viewBox="0 0 10 10"><path d="M1 1 L9 9 M9 1 L1 9" stroke="#000" stroke-width="1.7" fill="none"/></svg>
<div style="left:941px;top:182px;width:84px;height:23px;background:#c6c6c6;border:1px solid #000;border-radius:4px 4px 0 0;border-bottom:none;"></div>
<svg style="left:945px;top:186px;" width="16" height="16" viewBox="0 0 16 16"><rect width="16" height="16" fill="#3bb779"/><circle cx="8.1" cy="7.2" r="2.5" fill="none" stroke="#fff" stroke-width="1.5"/><path d="M2.6 11.7 C4.4 10.3 5.6 10.3 8.1 10.3 C10.6 10.3 11.8 10.3 13.7 11.7" fill="none" stroke="#fff" stroke-width="0.9" stroke-linecap="round"/><path d="M4.9 10.3 H11.3" stroke="#fff" stroke-width="1.3" stroke-linecap="round"/></svg>
<span style="left:965.00px;top:189.00px;font-size:11px;letter-spacing:-0.266px;">Mesh ...</span>
<svg style="left:1008px;top:189px;" width="10" height="10" viewBox="0 0 10 10"><path d="M1 1 L9 9 M9 1 L1 9" stroke="#000" stroke-width="1.7" fill="none"/></svg>
<div style="left:854px;top:182px;width:88px;height:23px;background:#c6c6c6;border:1px solid #000;border-radius:4px 4px 0 0;border-bottom:none;"></div>
<svg style="left:858px;top:186px;" width="16" height="16" viewBox="0 0 16 16"><rect width="16" height="16" fill="#3bb779"/><circle cx="8.1" cy="7.2" r="2.5" fill="none" stroke="#fff" stroke-width="1.5"/><path d="M2.6 11.7 C4.4 10.3 5.6 10.3 8.1 10.3 C10.6 10.3 11.8 10.3 13.7 11.7" fill="none" stroke="#fff" stroke-width="0.9" stroke-linecap="round"/><path d="M4.9 10.3 H11.3" stroke="#fff" stroke-width="1.3" stroke-linecap="round"/></svg>
<span style="left:878.00px;top:189.00px;font-size:11px;letter-spacing:-0.120px;">Pipelin...</span>
<svg style="left:925px;top:189px;" width="10" height="10" viewBox="0 0 10 10"><path d="M1 1 L9 9 M9 1 L1 9" stroke="#000" stroke-width="1.7" fill="none"/></svg>
<div style="left:761px;top:182px;width:94px;height:24px;background:#e1e1e1;border:1px solid #000;border-bottom:none;border-radius:4px 4px 0 0;"></div>
<svg style="left:765px;top:186px;" width="16" height="16" viewBox="0 0 16 16"><rect width="16" height="16" fill="#3bb779"/><circle cx="8.1" cy="7.2" r="2.5" fill="none" stroke="#fff" stroke-width="1.5"/><path d="M2.6 11.7 C4.4 10.3 5.6 10.3 8.1 10.3 C10.6 10.3 11.8 10.3 13.7 11.7" fill="none" stroke="#fff" stroke-width="0.9" stroke-linecap="round"/><path d="M4.9 10.3 H11.3" stroke="#fff" stroke-width="1.3" stroke-linecap="round"/></svg>
<span style="left:785.00px;top:189.00px;font-size:11px;letter-spacing:0.064px;">Texture ...</span>
<svg style="left:838px;top:189px;" width="10" height="10" viewBox="0 0 10 10"><path d="M1 1 L9 9 M9 1 L1 9" stroke="#000" stroke-width="1.7" fill="none"/></svg>
<div style="left:765px;top:209px;width:306px;height:32px;border:1px solid #000;border-radius:2px;"></div>
<span style="left:772.00px;top:220.00px;font-size:11px;letter-spacing:-0.348px;">Channels</span>
<div style="left:818px;top:214px;width:66px;height:22px;background:#fff;border:1px solid #000;border-radius:2px;"></div>
<span style="left:822.20px;top:220.00px;font-size:11px;">RGBA</span>
<svg style="left:869.7px;top:221.8px;" width="12" height="9" viewBox="0 0 12 9"><path d="M1 1 L6 7 L11 1" stroke="#000" stroke-width="1.5" fill="none"/></svg>
<div style="left:887px;top:212px;width:1px;height:26px;background:#000;"></div>
<div style="left:891px;top:214px;width:21px;height:22px;background:#c5cbd8;border:1px solid #141414;"></div>
<span style="left:897.52px;top:220.00px;font-size:11px;">R</span>
<div style="left:914px;top:214px;width:22px;height:22px;background:#c5cbd8;border:1px solid #141414;"></div>
<span style="left:920.72px;top:220.00px;font-size:11px;">G</span>
<div style="left:938px;top:214px;width:21px;height:22px;background:#c5cbd8;border:1px solid #141414;"></div>
<span style="left:944.83px;top:220.00px;font-size:11px;">B</span>
<span style="left:967.83px;top:220.00px;font-size:11px;">A</span>
<div style="left:988px;top:217px;width:15px;height:15px;border-radius:8px;background:radial-gradient(circle at 45% 40%,rgba(255,255,255,.9) 0,rgba(255,255,255,.45) 35%,rgba(255,255,255,0) 70%),conic-gradient(#b8e020 0deg,#ffe020 45deg,#ff9a20 90deg,#f02020 135deg,#e030e0 170deg,#8a30f0 200deg,#2050e0 240deg,#20a8e0 275deg,#20d060 320deg,#b8e020 360deg);"></div>
<div style="left:1010px;top:213px;width:24px;height:24px;background:#c5cbd8;border:1px solid #141414;"></div>
<svg style="left:1015px;top:218px;" width="14" height="14" viewBox="0 0 14 14"><rect width="14" height="14" fill="#fff"/><rect x="1" y="3" width="2" height="2" fill="#000"/><rect x="1" y="7" width="2" height="2" fill="#000"/><rect x="1" y="11" width="2" height="2" fill="#000"/><rect x="3" y="1" width="2" height="2" fill="#000"/><rect x="3" y="5" width="2" height="2" fill="#000"/><rect x="3" y="9" width="2" height="2" fill="#000"/><rect x="5" y="3" width="2" height="2" fill="#000"/><rect x="5" y="7" width="2" height="2" fill="#000"/><rect x="5" y="11" width="2" height="2" fill="#000"/><rect x="7" y="1" width="2" height="2" fill="#000"/><rect x="7" y="5" width="2" height="2" fill="#000"/><rect x="7" y="9" width="2" height="2" fill="#000"/><rect x="9" y="3" width="2" height="2" fill="#000"/><rect x="9" y="7" width="2" height="2" fill="#000"/><rect x="9" y="11" width="2" height="2" fill="#000"/><rect x="11" y="1" width="2" height="2" fill="#000"/><rect x="11" y="5" width="2" height="2" fill="#000"/><rect x="11" y="9" width="2" height="2" fill="#000"/><rect x="0.5" y="0.5" width="13" height="13" fill="none" stroke="#b87a30" stroke-width="1"/></svg>
<div style="left:1037px;top:212px;width:1px;height:26px;background:#000;"></div>
<div style="left:1041px;top:214px;width:23px;height:22px;background:#c5cbd8;border:1px solid #141414;"></div>
<span style="left:1049.75px;top:220.00px;font-size:11px;">γ</span>
<div style="left:1074px;top:209px;width:307px;height:32px;border:1px solid #000;border-radius:2px;"></div>
<span style="left:1081.40px;top:220.00px;font-size:11px;letter-spacing:-0.216px;">Subresource</span>
<div style="left:1144px;top:212px;width:1px;height:26px;background:#000;"></div>
<span style="left:1148.30px;top:220.00px;font-size:11px;letter-spacing:-0.245px;">Mip</span>
<div style="left:1168px;top:214px;width:88px;height:22px;background:#e1e1e1;border:1px solid #b4b4b4;border-radius:2px;"></div>
<span style="left:1172.20px;top:220.00px;font-size:11px;color:#a0a0a0;">0 - 432x240</span>
<svg style="left:1241.7px;top:221.8px;" width="12" height="9" viewBox="0 0 12 9"><path d="M1 1 L6 7 L11 1" stroke="#a8a8a8" stroke-width="1.2" fill="none"/></svg>
<span style="left:1258.20px;top:220.00px;font-size:11px;letter-spacing:-0.286px;">Slice/Face</span>
<div style="left:1309px;top:214px;width:65px;height:22px;background:#e1e1e1;border:1px solid #b4b4b4;border-radius:2px;"></div>
<svg style="left:1359.7px;top:221.8px;" width="12" height="9" viewBox="0 0 12 9"><path d="M1 1 L6 7 L11 1" stroke="#a8a8a8" stroke-width="1.2" fill="none"/></svg>
<div style="left:1384px;top:209px;width:179px;height:32px;border:1px solid #000;border-radius:2px;"></div>
<span style="left:1391.00px;top:220.00px;font-size:11px;letter-spacing:-0.225px;">Actions</span>
<svg style="left:1432px;top:217px;" width="16" height="16" viewBox="0 0 16 16"><rect x="0.7" y="0.7" width="14.6" height="14.6" rx="1.2" fill="#6cb6f0" stroke="#2a84d6" stroke-width="1.4"/><rect x="2.6" y="1.6" width="10.8" height="6.6" fill="#fff"/><path d="M3.6 3.4 H12.4 M3.6 5.4 H12.4" stroke="#7a8aa0" stroke-width="0.9" stroke-dasharray="1.6 0.8"/><path d="M2.6 1.6 V8.2 M13.4 1.6 V8.2" stroke="#1c5fa8" stroke-width="0.9"/><rect x="4.4" y="9.8" width="7.4" height="5.2" fill="#f4f8fc"/><rect x="6.2" y="11" width="1.8" height="3.4" fill="#444"/></svg>
<svg style="left:1458px;top:217px;" width="16" height="16" viewBox="0 0 16 16"><path d="M0.8 0.8 H6.5 L8.8 3 V12.6 H0.8 Z" fill="#f6f6f6" stroke="#b4b4b4" stroke-width="0.9"/><path d="M3.6 1.8 H9.4 L11.6 4 V14 H3.6 Z" fill="#f8f8f8" stroke="#b4b4b4" stroke-width="0.9"/><path d="M6.4 3.2 H12 L15 6 V15.4 H6.4 Z" fill="#fbfbfb" stroke="#b0b0b0" stroke-width="0.9"/><path d="M12 3.2 V6 H15" fill="none" stroke="#b0b0b0" stroke-width="0.8"/></svg>
<svg style="left:1484px;top:217px;" width="16" height="16" viewBox="0 0 16 16"><path d="M0.8 0.8 H8.4 L12.6 5 V15.3 H0.8 Z" fill="#fafafa" stroke="#b4b4b4" stroke-width="0.9"/><path d="M8.4 0.8 V5 H12.6" fill="none" stroke="#b4b4b4" stroke-width="0.9"/><path d="M8.4 7.4 L5.4 10.8 L8.4 14.2 M11.4 7.4 L14.4 10.8 L11.4 14.2" stroke="#1f80d2" stroke-width="2.3" fill="none"/></svg>
<svg style="left:1510px;top:217px;" width="16" height="16" viewBox="0 0 16 16"><path d="M2.2 0.8 H5.6 V3 L7 5.6 V14.6 H0.8 V5.6 L2.2 3 Z" fill="#9a9a9a" stroke="#585858" stroke-width="0.9" stroke-linejoin="round"/><path d="M10.4 0.8 H13.8 V3 L15.2 5.6 V14.6 H9 V5.6 L10.4 3 Z" fill="#9a9a9a" stroke="#585858" stroke-width="0.9" stroke-linejoin="round"/><rect x="7" y="6" width="2" height="3.6" fill="#6a6a6a"/><rect x="2.6" y="1.4" width="2.6" height="1.2" fill="#d4d4d4"/><rect x="10.8" y="1.4" width="2.6" height="1.2" fill="#d4d4d4"/><rect x="1.4" y="9.6" width="5" height="2.4" fill="#d8d8d8"/><rect x="9.6" y="9.6" width="5" height="2.4" fill="#d8d8d8"/><rect x="1.4" y="6" width="5" height="1.2" fill="#bcbcbc"/><rect x="9.6" y="6" width="5" height="1.2" fill="#bcbcbc"/></svg>
<svg style="left:1536px;top:217px;" width="16" height="16" viewBox="0 0 16 16"><path d="M5.6 9.6 L9.4 5.4" stroke="#7a7a7a" stroke-width="3.4" stroke-linecap="round"/><path d="M5.6 9.6 L9.4 5.4" stroke="#e4e4e4" stroke-width="1.2" stroke-linecap="round"/><circle cx="11.2" cy="3.7" r="3" fill="#dcdcdc" stroke="#787878" stroke-width="1.2"/><circle cx="3.8" cy="11.5" r="3" fill="#dcdcdc" stroke="#787878" stroke-width="1.2"/><circle cx="11.2" cy="3.7" r="1.2" fill="#f4f4f4"/><circle cx="3.8" cy="11.5" r="1.2" fill="#f4f4f4"/></svg>
<div style="left:765px;top:244px;width:220px;height:32px;border:1px solid #000;border-radius:2px;"></div>
<span style="left:772.00px;top:255.00px;font-size:11px;letter-spacing:-0.281px;">Zoom</span>
<span style="left:809.00px;top:255.00px;font-size:11px;letter-spacing:0.068px;">1:1</span>
<div style="left:834px;top:248px;width:46px;height:24px;background:#c5cbd8;border:1px solid #141414;"></div>
<svg style="left:837.5px;top:252px;" width="16" height="16" viewBox="0 0 16 16"><g fill="#a6d81c" stroke="#6a9c0c" stroke-width="0.9"><rect x="0.6" y="0.6" width="5.4" height="5.4"/><rect x="10" y="0.6" width="5.4" height="5.4"/><rect x="0.6" y="10" width="5.4" height="5.4"/><rect x="10" y="10" width="5.4" height="5.4"/></g><g stroke="#e8fca0" stroke-width="0.9" fill="none"><path d="M1.8 1.8 L4.8 4.8 M1.8 3.8 V1.8 H3.8"/><path d="M14.2 1.8 L11.2 4.8 M14.2 3.8 V1.8 H12.2"/><path d="M1.8 14.2 L4.8 11.2 M1.8 12.2 V14.2 H3.8"/><path d="M14.2 14.2 L11.2 11.2 M14.2 12.2 V14.2 H12.2"/></g></svg>
<span style="left:858.00px;top:255.00px;font-size:11px;letter-spacing:0.089px;">Fit</span>
<div style="left:882px;top:249px;width:70px;height:22px;background:#fff;border:1px solid #000;border-radius:2px;"></div>
<span style="left:886.20px;top:255.00px;font-size:11px;">169%</span>
<svg style="left:937.7px;top:256.8px;" width="12" height="9" viewBox="0 0 12 9"><path d="M1 1 L6 7 L11 1" stroke="#000" stroke-width="1.5" fill="none"/></svg>
<svg style="left:960.5px;top:252px;" width="11" height="16" viewBox="0 0 11 16"><path d="M5.5 0.6 L9.7 5 H7.2 V11 H9.7 L5.5 15.4 L1.3 11 H3.8 V5 H1.3 Z" fill="#a6d81c" stroke="#6a9c0c" stroke-width="0.9" stroke-linejoin="round"/><path d="M5.5 2.2 V13.8" stroke="#d0f264" stroke-width="1" opacity="0.8"/></svg>
<div style="left:988px;top:244px;width:199px;height:32px;border:1px solid #000;border-radius:2px;"></div>
<span style="left:995.40px;top:255.00px;font-size:11px;letter-spacing:-0.272px;">Overlay</span>
<div style="left:1034px;top:249px;width:146px;height:22px;background:#fff;border:1px solid #000;border-radius:2px;"></div>
<span style="left:1038.20px;top:255.00px;font-size:11px;">None</span>
<svg style="left:1165.7px;top:256.8px;" width="12" height="9" viewBox="0 0 12 9"><path d="M1 1 L6 7 L11 1" stroke="#000" stroke-width="1.5" fill="none"/></svg>
<div style="left:1190px;top:244px;width:545px;height:32px;border:1px solid #000;border-radius:2px;"></div>
<span style="left:1197.30px;top:255.00px;font-size:11px;letter-spacing:-0.384px;">Range</span>
<div style="left:1231px;top:251px;width:91px;height:18px;background:#fff;border:1px solid #000;border-radius:2px;"></div>
<span style="left:1235.50px;top:255.50px;font-size:11px;">0.00</span>
<div style="left:1329px;top:251px;width:192px;height:18px;background:#7b8aa6;border:1px solid #4a5468;"></div>
<svg style="left:1324px;top:246px;" width="12" height="11" viewBox="0 0 12 11"><path d="M1 1 H11 L6 10 Z" fill="#000"/></svg>
<svg style="left:1514px;top:261px;" width="14" height="12" viewBox="0 0 14 12"><path d="M7 1 L13 11 H1 Z" fill="#fff" stroke="#555" stroke-width="0.8"/></svg>
<div style="left:1528px;top:251px;width:91px;height:18px;background:#fff;border:1px solid #000;border-radius:2px;"></div>
<span style="left:1532.40px;top:255.50px;font-size:11px;">1.00</span>
<svg style="left:1626px;top:252px;" width="16" height="16" viewBox="0 0 16 16"><path d="M10.6 10.4 L14 13.6" stroke="#f0a030" stroke-width="3" stroke-linecap="round"/><circle cx="6.7" cy="6.3" r="5.5" fill="#aedcfa" stroke="#e6b45c" stroke-width="1.7"/><circle cx="6.7" cy="6.3" r="4.3" fill="none" stroke="#8cc6f2" stroke-width="0.8"/><path d="M3.6 6 A3.4 3.4 0 0 1 6.6 3" stroke="#e8f6ff" stroke-width="1.4" fill="none"/></svg>
<svg style="left:1653px;top:252px;" width="16" height="16" viewBox="0 0 16 16"><path d="M11.2 4.4 m0 -4.6 l1.1 2 l2.1 -1 l-0.5 2.3 l2.3 0.5 l-1.7 1.6 l1.3 1.9 l-2.3 0.1 l-0.3 2.3 l-1.8 -1.5 l-1.8 1.5 l-0.3 -2.3 l-2.3 -0.1 l1.3 -1.9 l-1.7 -1.6 l2.3 -0.5 l-0.5 -2.3 l2.1 1 Z" fill="#f7a22c"/><path d="M1.4 13.6 L11.4 3.8" stroke="#4a4a4a" stroke-width="2.9" stroke-linecap="round"/><path d="M1.6 13.4 L5 10" stroke="#d8d8d8" stroke-width="1.5" stroke-linecap="round"/><path d="M8.6 6.6 L11.2 4" stroke="#f0f0f0" stroke-width="1.5" stroke-linecap="round"/></svg>
<svg style="left:1680px;top:252px;" width="16" height="16" viewBox="0 0 16 16"><path d="M1.2 0.5 H10.4 A5.6 5.6 0 0 1 10.4 11.7 H5.6 V14.8 L0.4 10 L5.6 5.4 V8.4 H10.4 A2.3 2.3 0 0 0 10.4 3.8 H1.2 Z" fill="#9ad014" stroke="#6a9c0c" stroke-width="0.9" stroke-linejoin="round"/><path d="M2 1.6 H10.4 A4.5 4.5 0 0 1 14.6 5" stroke="#d0f264" stroke-width="0.9" fill="none" opacity="0.8"/></svg>
<svg style="left:1707px;top:252px;" width="16" height="16" viewBox="0 0 16 16"><rect x="0.6" y="0.6" width="14.6" height="14.8" fill="#fdfdfd" stroke="#a4a4a4" stroke-width="1.1"/><path d="M3 3 H13 M3 12.4 H13 M5.5 2.4 V13.4 M10 2.4 V13.4" stroke="#d4d4dc" stroke-width="0.6" stroke-dasharray="1.5 1"/><path d="M2.4 2.6 C4.4 9 7.5 10.4 13 10.6" stroke="#d2281e" stroke-width="1.3" fill="none"/><path d="M2.4 7.4 C7 7.4 6.8 4.6 13 4.4" stroke="#3c9a1e" stroke-width="1.3" fill="none"/><path d="M2.4 12.6 C7.4 12.2 7 6.8 13 6.6" stroke="#1f7fd2" stroke-width="1.3" fill="none"/></svg>
<div style="left:765px;top:280px;width:171px;height:22px;background:#c6c6c6;border:1px solid #000;border-radius:4px 4px 0 0;border-bottom:none;"></div>
<svg style="left:769px;top:283px;" width="16" height="16" viewBox="0 0 16 16"><rect width="16" height="16" fill="#3bb779"/><circle cx="8.1" cy="7.2" r="2.5" fill="none" stroke="#fff" stroke-width="1.5"/><path d="M2.6 11.7 C4.4 10.3 5.6 10.3 8.1 10.3 C10.6 10.3 11.8 10.3 13.7 11.7" fill="none" stroke="#fff" stroke-width="0.9" stroke-linecap="round"/><path d="M4.9 10.3 H11.3" stroke="#fff" stroke-width="1.3" stroke-linecap="round"/></svg>
<span style="left:789.00px;top:286.00px;font-size:11px;letter-spacing:0.075px;">Cur Output 0 - Texture 153</span>
<div style="left:765px;top:301px;width:171px;height:1px;background:#000;"></div>
<div style="left:935px;top:279px;width:111px;height:24px;background:#e1e1e1;border:1px solid #000;border-bottom:none;border-radius:4px 4px 0 0;"></div>
<svg style="left:939px;top:283px;" width="16" height="16" viewBox="0 0 16 16"><path d="M2.5 1 H9.5 L12.5 4 V14.5 H2.5 Z" fill="#fcfcfc" stroke="#5a8ad0" stroke-width="0.9"/><path d="M9.5 1 V4 H12.5" fill="none" stroke="#5a8ad0" stroke-width="0.9"/><path d="M6 10.2 H11 V8 L15.4 11.6 L11 15.2 V13 H6 Z" fill="#8cc81e" stroke="#5a900c" stroke-width="0.8" stroke-linejoin="round"/></svg>
<span style="left:959.00px;top:286.00px;font-size:11px;letter-spacing:0.138px;">Texture 137</span>
<svg style="left:1029px;top:286px;" width="10" height="10" viewBox="0 0 10 10"><path d="M1 1 L9 9 M9 1 L1 9" stroke="#000" stroke-width="1.7" fill="none"/></svg>
<div style="left:1516px;top:299px;width:249px;height:546px;border:1px solid #000;border-radius:0 0 2px 2px;"></div>
<div style="left:1516px;top:280px;width:84px;height:20px;background:#c6c6c6;border:1px solid #000;border-radius:4px 4px 0 0;border-bottom:none;"></div>
<span style="left:1520.20px;top:284.50px;font-size:11px;letter-spacing:-0.161px;">Inputs</span>
<div style="left:1516px;top:299px;width:84px;height:1px;background:#000;"></div>
<div style="left:1599px;top:279px;width:83px;height:21px;background:#e1e1e1;border:1px solid #000;border-bottom:none;border-radius:4px 4px 0 0;"></div>
<span style="left:1603.00px;top:284.50px;font-size:11px;letter-spacing:-0.290px;">Outputs</span>
<div style="left:1523px;top:306px;width:235px;height:180px;background:#000;border:4px solid #ff0000;border-radius:4px;"></div>
<div style="left:1527px;top:324px;width:227px;height:1px;background:#d8d8d8;"></div>
<div style="left:1527px;top:325px;width:227px;height:127px;background:#242221;"></div>
<svg style="left:1527px;top:325px;" width="227" height="127" viewBox="0 0 227 127"><path d="M48.8 7.7 L60 4 L75 0 H165 L170 60 L176 118 L172 127 H61 L56 60 Z" fill="#292422"/><rect x="0" y="0" width="227" height="1.6" fill="#2a1230"/><rect x="50.6" y="8.5" width="114.4" height="11.5" fill="#2c1a2e"/><rect x="50.6" y="8.5" width="114.4" height="1" fill="#34103a"/><rect x="50.6" y="19.5" width="114.4" height="1" fill="#34103a"/><rect x="55.8" y="53.4" width="116.2" height="1.4" fill="#36103c"/><rect x="0" y="20.7" width="228" height="7" fill="#2b1c2e"/><rect x="55.8" y="54.8" width="116.2" height="41" fill="#2c2608"/><path d="M209.4 54.8 L228 60 V100.4 L195.4 89.7 Z" fill="#2c2608" stroke="#1d3436" stroke-width="1"/><g fill="none" stroke="#1d3a3b" stroke-width="1.1"><path d="M0 5 L36 90 L39 93 L39.5 86 L3 2"/><path d="M48.8 7.7 L52 9 L55 4 L60 6 L75 1 M48.8 7.7 L55 50 L58 90 L61 127"/><path d="M165 0 L168 50 L172 80 L176 118 L172 127"/><path d="M186.7 2.4 L180 30 L171 47.8 L170 70"/><path d="M0 108.9 L50.6 97.5 L53 103 L56 112"/><path d="M193.7 9 L228 23 M192 14 L228 29 M193.7 9 Q189 10 192 14"/><circle cx="100" cy="22" r="12"/><path d="M131 82 V100 Q128 108 124 110"/></g><rect x="170" y="47" width="5" height="9" fill="#3a2428"/><rect x="55" y="112" width="6" height="8" fill="#3a2428"/><circle cx="131" cy="82" r="2.2" fill="#34302f"/><path d="M28 40 L40 36" stroke="#2c3010" stroke-width="1.2"/></svg>
<div style="left:1527px;top:466px;width:227px;height:16px;background:#666;"></div>
<span style="left:1528.30px;top:468.70px;font-size:11px;letter-spacing:-0.796px;">FB0</span>
<span style="left:1622.40px;top:468.70px;font-size:11px;letter-spacing:0.011px;">Texture 153</span>
<div style="left:1516px;top:850px;width:249px;height:188px;border:1px solid #000;border-radius:2px;"></div>
<div style="left:1517px;top:851px;width:247px;height:14px;background:#bebebe;"></div>
<div style="left:1517px;top:864px;width:247px;height:1px;background:#8a8a8a;"></div>
<span style="left:1521.00px;top:853.30px;font-size:11px;letter-spacing:-0.178px;">Pixel Context</span>
<div style="left:1517px;top:865px;width:247px;height:149px;background-color:#e6e6e6;background-image:conic-gradient(#a0a0a0 25%,#e6e6e6 0 50%,#a0a0a0 0 75%,#e6e6e6 0);background-size:128px 128px;background-position:0px 21px;"></div>
<div style="left:1551px;top:1015px;width:57px;height:21px;background:#cacaca;border:1px solid #c0c0c0;border-radius:3px;border-right-color:#8c8c8c;border-bottom-color:#8c8c8c;"></div>
<span style="left:1562.75px;top:1020.50px;font-size:11px;color:#a0a0a0;letter-spacing:-0.105px;">History</span>
<div style="left:1674px;top:1015px;width:57px;height:21px;background:#cacaca;border:1px solid #c0c0c0;border-radius:3px;border-right-color:#8c8c8c;border-bottom-color:#8c8c8c;"></div>
<span style="left:1687.25px;top:1020.50px;font-size:11px;color:#a0a0a0;letter-spacing:-0.384px;">Debug</span>
<div style="left:765px;top:302px;width:746px;height:736px;border:1px solid #000;border-top:none;border-radius:0 0 2px 2px;"></div>
<div style="left:1045px;top:302px;width:466px;height:1px;background:#000;"></div>
<div style="left:1496px;top:303px;width:14px;height:692px;background:#c8c8c8;"></div>
<svg style="left:1496.5px;top:306.5px;" width="13" height="8" viewBox="0 0 13 8"><path d="M1.6 6.6 L6.5 1.8 L11.4 6.6" stroke="#555" stroke-width="1.7" fill="none"/></svg>
<svg style="left:1496.5px;top:983px;" width="13" height="8" viewBox="0 0 13 8"><path d="M1.6 1.4 L6.5 6.2 L11.4 1.4" stroke="#555" stroke-width="1.7" fill="none"/></svg>
<div style="left:766px;top:995px;width:730px;height:13px;background:#c8c8c8;"></div>
<svg style="left:769px;top:996px;" width="8" height="12" viewBox="0 0 8 12"><path d="M6.8 1 L1.6 6 L6.8 11" stroke="#555" stroke-width="1.7" fill="none"/></svg>
<svg style="left:1484px;top:996px;" width="8" height="12" viewBox="0 0 8 12"><path d="M1.2 1 L6.4 6 L1.2 11" stroke="#555" stroke-width="1.7" fill="none"/></svg>
<div style="left:766px;top:709px;width:730px;height:286px;background-color:#e6e6e6;background-image:conic-gradient(#a0a0a0 25%,#e6e6e6 0 50%,#a0a0a0 0 75%,#e6e6e6 0);background-size:128px 128px;background-position:0px 30px;"></div>
<div style="left:1488px;top:303px;width:8px;height:406px;background:#000;"></div>
<span style="left:766.50px;top:1010.00px;font-size:12px;font-family:'Liberation Mono', monospace;">Texture 137 - 432x240 1 mips - R8G8B8A8_UNORM</span>
<div style="left:1093px;top:1010px;width:32px;height:13px;background:#cdc8c4;"></div>
<span style="left:766.50px;top:1024.00px;font-size:12px;font-family:'Liberation Mono', monospace;">Hover -  413,  142 (0.9560, 0.5917) - Right click to pick a pixel</span>
<svg style="left:766px;top:303px;" width="722" height="406" viewBox="0 0 722 406" shape-rendering="geometricPrecision"><rect width="722" height="406" fill="#cbc7c0"/><path d="M64 0 H134 L120 6 L96 8 L80 5 Z" fill="#b9b3a9" opacity="0.8"/><path d="M82 18 L98 11 L100 15 L86 21 Z" fill="#bdb7ae"/><g stroke="#b9b4ab" stroke-width="1" fill="none"><path d="M83 143 L110 112 M88 131 L130 118 M88 137 L114 120 M100 136 L132 119 M90 124 L110 108"/></g><g stroke="#d3cfc8" stroke-width="4" fill="none" opacity="0.4" stroke-linecap="round"><path d="M95 165 L120 175 L134 190 M0 260 L12 300 M4 285 L18 310"/><path d="M640 150 L672 128 M700 140 L722 132 M690 160 L722 148 M660 390 L700 370 L722 350"/></g><path d="M-2 349 L157 309.6 L163.5 311.5 L165.6 320 L155.6 328.5 L167.6 332 L173 344.5 L168 379.5 L173 386.7 L189 389.5 L198 408 H-2 Z" fill="#e8dfc8" stroke="#787671" stroke-width="3.6" stroke-linejoin="round"/><g fill="#e2d8bf" opacity="0.9"><path d="M64 376 L78 366 L80 372 L92 368 L100 374 L94 392 L84 400 L74 394 L78 384 Z"/><path d="M130 372 Q136 364 141 372 L139 406 H132 Z"/><ellipse cx="160" cy="402" rx="9" ry="5"/></g><path d="M520 -2 L546 -2 L569.5 3.8 L563.8 24.6 L577 7.6 L596 11.4 L586.5 57 L571.4 125 L558 159 L554.3 189.5 L546.7 233 L531 132 Z" fill="#c5bcba" stroke="#787671" stroke-width="3.6" stroke-linejoin="round"/><path d="M222.6 -2 L221 2.5 L207.5 8 L205.2 22 L204.5 4.5 L194 10 L190 28 L183 6.5 L172 10 L151 18.5 L147.6 24.5 L157 53 L166.6 102 L171.6 137 L172.9 149.2 L175 153.9 L176.7 157.3 L176.3 164 L173 163 L171.6 167.5 L172.3 180.4 L174.3 187 L176.3 196.6 L178.7 250 L185 277 L187.6 298 L191 332.5 L194.2 360 L202.8 364.5 L196.9 376 L198.2 408 L478.6 408 L490 402 L506 399.5 L509 396 L512 399 L540 396.5 L552.4 393.8 L560 375 L552.4 340.8 L546.7 257.5 L541 219.6 L531.6 132.5 L527.8 45.4 L520.2 -2 Z" fill="#e6dedc" stroke="#787671" stroke-width="3.8" stroke-linejoin="round"/><path d="M546.5 236 L549.6 257.5 L555.2 340.8 L562.6 375" fill="none" stroke="#94928c" stroke-width="2.6"/><path d="M175 153 L194.5 162.8 L176.5 165.5 Z" fill="#706f6a"/><path d="M178 165.5 L198 164.5 L186 168.5 L179 168.5 Z" fill="#c5bebc"/><path d="M149 26 L153 21 L173 13 L182 10 L190 31 L196 13 L204 9 L205.5 25 L210 11 L222 6.5 L262 6 L300 4 L330 1 L300 7 L262 11 L224 12 L212 15 L206 29 L204 14 L198 16 L190 35 L181 14 L173 17 L155 24 Z" fill="#c5bdbb"/><path d="M147.6 24.5 L151 18.5 L172 10 L183 6.5 L190 28 L194 10 L204.5 4.5 L205.2 22 L207.5 8 L221 2.5 L262 2 L300 0 L320 -2" fill="none" stroke="#7c7a74" stroke-width="5" stroke-linejoin="round"/><path d="M186.3 298 L175.7 343 L167.8 379.4 L173 386.7 L189 389.3 L195.6 388 L196.9 376 L202.8 364.9 L193.6 361.6 L190.3 330 L187.6 300.8 Z" fill="#c6bfbe" stroke="#787671" stroke-width="3.2" stroke-linejoin="round"/><circle cx="317.5" cy="71.5" r="37.2" fill="none" stroke="#dbd3d1" stroke-width="10.5"/><path d="M325 42 Q340 48 338 66 Q336 84 320 92" fill="none" stroke="#dcd4d2" stroke-width="3.5"/><path d="M287 94 Q300 110 322 112 Q336 111 344 104" fill="none" stroke="#d6cecc" stroke-width="3"/><g fill="#d9d1cf"><ellipse cx="247" cy="69" rx="8" ry="5" transform="rotate(-20 247 69)"/><ellipse cx="228" cy="78" rx="4" ry="2.5"/><ellipse cx="475" cy="115" rx="7" ry="4" transform="rotate(-35 475 115)"/><ellipse cx="486" cy="100" rx="3" ry="2.5"/><ellipse cx="321" cy="339" rx="6" ry="4"/><ellipse cx="271" cy="371" rx="9" ry="5" transform="rotate(25 271 371)"/><ellipse cx="243" cy="353" rx="5" ry="8" transform="rotate(-25 243 353)"/><ellipse cx="380" cy="314" rx="5" ry="3"/></g><path d="M413 258 Q417 252 421 258 L420 300 Q419 325 426 335 Q434 346 428 354 Q420 352 416 356 Q398 358 386 356 Q382 344 392 338 Q408 326 412 300 Z" fill="#d9d1cf"/><g stroke="#d5cdcb" stroke-width="1" fill="none"><path d="M214 236 L250 292 M232 290 L220 318 M226 300 L236 306 M470 24 L505 54 M205 365 L240 395 M215 372 L225 400 M290 385 L310 400 M355 78 L365 120 M360 76 L372 110"/></g><path d="M666 170.5 L724 190 V325.5 L618 288.8 L649.6 203 L659 183 Z" fill="#e8dfc8" stroke="#787671" stroke-width="3.4" stroke-linejoin="round"/><g fill="#e3d9c0"><path d="M668 226 Q674 220 677 228 L676 270 Q680 290 672 298 L658 300 Q652 286 660 270 Z"/><path d="M650 250 L658 246 L656 290 L650 292 Z"/></g><path d="M-3.2 -2 L4.3 -2 L129.6 272 L127.8 296 L123 302 L120.3 272 Z" fill="#8f8d86"/><path d="M-5.2 -2 L119.7 270.7 L120.6 299 L118.7 300.8 L98.5 277.7 L-26.3 -2 Z" fill="#d39c3b"/><path d="M-15.7 -2 L-5.2 -2 L119.7 270.7 L110.5 273.5 Z" fill="#966c22"/><path d="M98.5 277.7 L110.5 273.5 L119.7 270.7 L120.6 299 L118.7 300.8 Z" fill="#dcb078"/><path d="M114.3 272 L119.7 270.7 L120.6 299 L118.4 296 Z" fill="#c49858"/><path d="M112.4 293.6 L119.8 291.4 L120.8 299.6 L118.7 301.2 Z" fill="#3c4a52"/><path d="M-5.2 -2 L119.7 270.7 L120.6 299 L118.7 300.8 L98.5 277.7 L-26.3 -2" fill="none" stroke="#5a3d14" stroke-width="4" stroke-linejoin="round"/><path d="M619 24 Q622 15 633 16.5 L724 60.5 V71.5 L634 28 Z" fill="#8f8d86"/><path d="M633 27.5 L724 71.5 V94.7 L630 50.0 Z" fill="#d39c3b"/><path d="M640 30.9 L724 71.5 V76.5 L640 39.9 Z" fill="#966c22"/><path d="M633 27.5 L724 71.5 M724 94.7 L630 50.0" fill="none" stroke="#5a3d14" stroke-width="3.6" stroke-linejoin="round"/><path d="M630.5 26.3 L643.5 32.6 L640.5 55.0 L627.6 48.9 Z" fill="#a89a80" stroke="#5a3d14" stroke-width="2" stroke-linejoin="round"/><path d="M634.5 29.6 L638 31.3 L634.6 50.8 L631.2 49.2 Z" fill="#8c8474"/><path d="M631 25.9 Q616 21 612.8 34.5 Q611.8 45.5 628 49.4 Z" fill="#b87c7c" stroke="#5a3d14" stroke-width="2.4"/><ellipse cx="620.5" cy="35" rx="4.6" ry="6" fill="#c48a8a" transform="rotate(-15 620.5 35)"/></svg>
<svg style="left:9px;top:1049px;" width="16" height="16" viewBox="0 0 16 16"><path d="M2.5 7.5 V14.5 H13.5 V7.5" fill="#f2f2f2" stroke="#9a9a9a" stroke-width="0.9"/><path d="M10.5 2 H12.5 V5" fill="#eee" stroke="#9a9a9a" stroke-width="0.8"/><path d="M1 8 L8 1.5 L15 8" fill="#f2f2f2" stroke="#8a8a8a" stroke-width="1.4" stroke-linejoin="round"/><rect x="6" y="9" width="4" height="5.5" fill="#bdbdbd" stroke="#8a8a8a" stroke-width="0.8"/><circle cx="8" cy="6" r="1" fill="#8a8a8a"/></svg>
<span style="left:29.20px;top:1051.50px;font-size:12px;color:#a0a0a0;letter-spacing:-0.234px;">Replay Context: Local</span>
<span style="left:179.40px;top:1051.50px;font-size:12px;letter-spacing:-0.242px;">yuzu-cmd_2018.04.15_04.09.25_frame15.rdc loaded. Capture has 18 issues. 18 Unread.</span>
<div style="left:3px;top:1070px;width:1766px;height:1px;background:#f3eae5;"></div>
<div style="left:3px;top:1042px;width:1px;height:28px;background:#f3eae5;"></div>
<div style="left:1768px;top:32px;width:1px;height:25px;background:#f3eae5;"></div>
<div style="left:1768px;top:1042px;width:1px;height:28px;background:#f3eae5;"></div>
</div></body></html>
